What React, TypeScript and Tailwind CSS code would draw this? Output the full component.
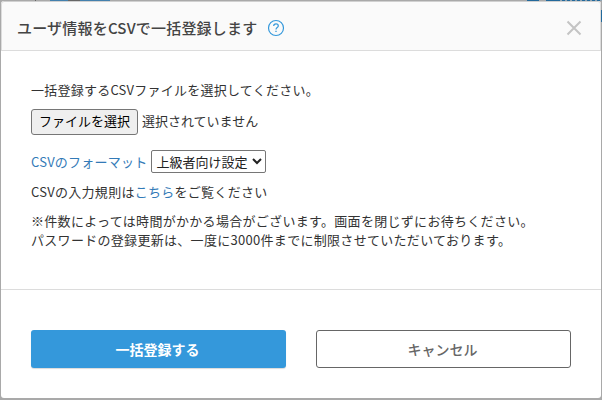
import { useState } from "react";

interface FormatOption {
  value: string;
  label: string;
}

const formats: FormatOption[] = [{ value: "advanced", label: "上級者向け設定" }];

function HelpIcon() {
  return (
    <svg width="18" height="18" viewBox="0 0 18 18" fill="none" stroke="#3498db">
      <circle cx="9" cy="9" r="7.5" strokeWidth="1.2" />
      <path d="M6.7 7C6.7 5.6 7.7 4.9 9 4.9s2.3.8 2.3 2c0 1.6-2.3 1.7-2.3 3.5" strokeWidth="1.2" />
      <path d="M9 11.7v1.4" strokeWidth="1.3" />
    </svg>
  );
}

function CloseIcon() {
  return (
    <svg width="16" height="16" viewBox="0 0 16 16" fill="none" stroke="#c4c4c4" strokeWidth="2">
      <path d="M1.5 1.5l13 13M14.5 1.5l-13 13" />
    </svg>
  );
}

export default function App() {
  const [format, setFormat] = useState("advanced");

  return (
    <div className="relative flex h-[400px] w-[602px] overflow-hidden bg-[#a9a9a9] p-px pb-0.5 font-['Noto_Sans_CJK_JP',sans-serif] text-[13px] leading-[19px] text-[#333]">
      {/* Page behind the dialog */}
      <div className="absolute top-0 left-[50px] h-px w-[60px] bg-[#4380ad]" />
      <div className="absolute top-0 left-[68px] h-px w-3 bg-[#666]" />
      <div className="absolute top-0 left-[35px] h-px w-px bg-[#666]" />
      <div className="absolute top-0 left-[527px] h-px w-3 bg-[#23699b]" />
      <div className="absolute top-0 left-[546px] h-px w-[11px] bg-[#23699b]" />
      <div className="absolute top-0 left-[557px] h-px w-[45px] bg-[repeating-linear-gradient(90deg,#23699b_0_3px,#8fa4b3_3px_5px)]" />
      <div className="absolute top-[10px] left-[601px] h-3 w-px bg-[#23699b]" />

      <div className="relative flex w-full flex-col overflow-hidden rounded-[3px] bg-white">
        <header className="flex h-[50px] shrink-0 items-center rounded-t-[3px] border border-[#dcdcdc] border-t-[#d0d0d0] bg-[#fafafa] pt-[3px] pr-[18px] pl-[15px]">
          <h2 className="text-[15px] leading-[22px] font-medium tracking-[0.2px] text-[#444]">
            ユーザ情報をCSVで一括登録します
          </h2>
          <span className="ml-2.5">
            <HelpIcon />
          </span>
          <button type="button" className="mt-px ml-auto" aria-label="閉じる">
            <CloseIcon />
          </button>
        </header>

        <main className="flex h-[239px] shrink-0 flex-col items-start border-b border-[#dcdcdc] px-[30px] pt-[29px]">
          <p className="tracking-[0.24px]">一括登録するCSVファイルを選択してください。</p>
          <div className="mt-[10px] flex h-[26px] items-center">
            <button
              type="button"
              className="h-[26px] w-[107px] rounded-[3px] border border-[#767676] bg-[#efefef] pb-[3px] text-black"
            >
              ファイルを選択
            </button>
            <span className="ml-1 pb-[3px]">選択されていません</span>
          </div>
          <div className="mt-[15px] flex h-[23px] items-center">
            <a href="#" className="tracking-[0.22px] text-[#337ab7]">
              CSVのフォーマット
            </a>
            <div className="relative ml-1 h-[23px] w-[115px]">
              <select
                value={format}
                onChange={(e) => setFormat(e.target.value)}
                className="block h-full w-full appearance-none rounded-[2px] border border-[#767676] bg-white pl-1 leading-[19px] text-[#222]"
              >
                {formats.map((item) => (
                  <option key={item.value} value={item.value}>
                    {item.label}
                  </option>
                ))}
              </select>
              <svg
                className="pointer-events-none absolute top-2 right-1"
                width="10"
                height="7"
                viewBox="0 0 10 7"
                fill="none"
                stroke="#222"
                strokeWidth="2"
              >
                <path d="M1 1l4 4 4-4" />
              </svg>
            </div>
          </div>
          <p className="mt-[9px] tracking-[0.28px]">
            CSVの入力規則は
            <a href="#" className="text-[#337ab7]">
              こちら
            </a>
            をご覧ください
          </p>
          <p className="mt-[10px] tracking-[0.3px]">
            ※件数によっては時間がかかる場合がございます。画面を閉じずにお待ちください。
            <br />
            パスワードの登録更新は、一度に3000件までに制限させていただいております。
          </p>
        </main>

        <footer className="flex flex-1 items-start gap-[30px] px-[30px] pt-10 text-sm font-bold">
          <button
            type="button"
            className="h-[38px] w-[255px] rounded-[3px] bg-[#3498db] pr-0.5 text-white shadow-[0_1px_1px_rgba(0,0,0,0.15)]"
          >
            一括登録する
          </button>
          <button
            type="button"
            className="h-[38px] w-[255px] rounded-[3px] border border-[#666] bg-white pr-0.5 font-medium text-[#666]"
          >
            キャンセル
          </button>
        </footer>
      </div>
    </div>
  );
}
